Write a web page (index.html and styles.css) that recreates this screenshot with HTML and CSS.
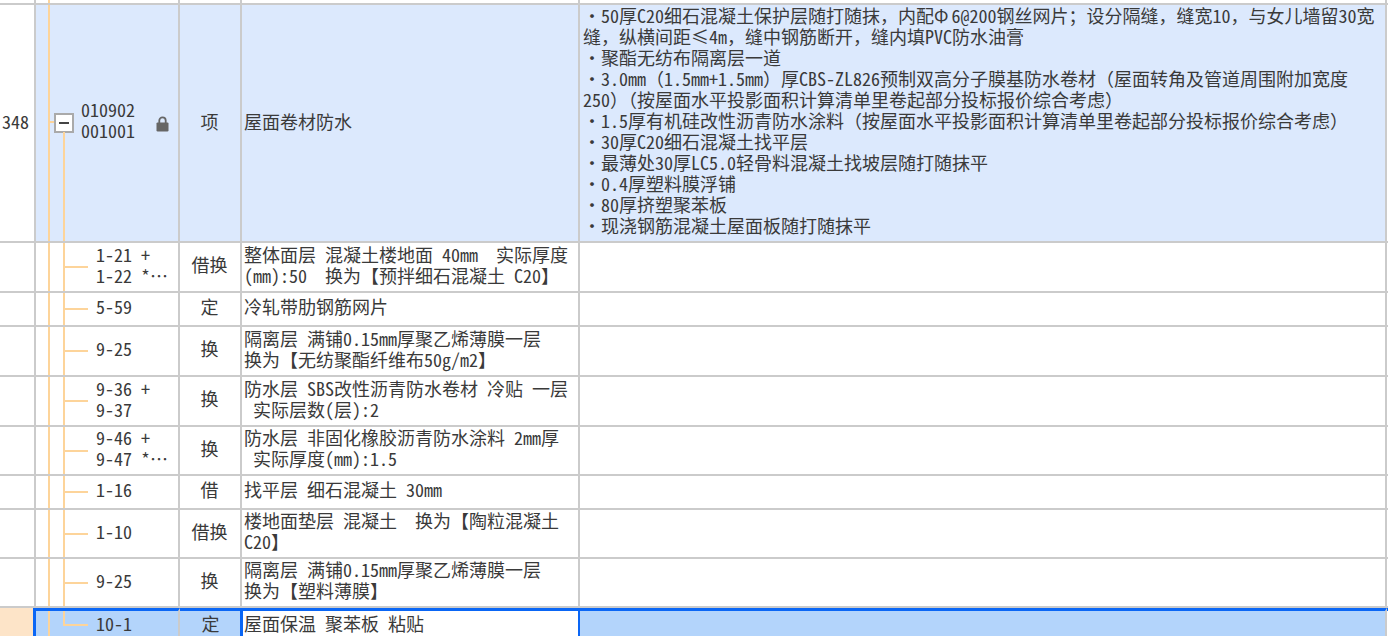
FILE: index.html
```html
<!DOCTYPE html>
<html lang="zh-CN">
<head>
<meta charset="utf-8">
<title>清单</title>
<link rel="stylesheet" href="styles.css">
</head>
<body>
<div class="sheet">
  <div class="row row-top">
    <div class="cell num"></div>
    <div class="cell code"></div>
    <div class="cell type"></div>
    <div class="cell name"></div>
    <div class="cell desc"></div>
  </div>
  <div class="row row-item">
    <div class="cell num">348</div>
    <div class="cell code code-parent">
      <span class="stub"></span>
      <span class="toggle"><span class="minus"></span></span>
      <span class="code-text code-main">010902<br>001001</span>
      <svg class="lock" viewBox="0 0 13 16" aria-hidden="true"><path fill="none" stroke="#666" stroke-width="1.8" d="M3.3 7V4.6a3.2 3.2 0 0 1 6.4 0V7"/><rect x="0.5" y="6.4" width="12" height="9" rx="1.2" fill="#666"/></svg>
    </div>
    <div class="cell type">项</div>
    <div class="cell name">屋面卷材防水</div>
    <div class="cell desc">
      <div class="line">・50厚C20细石混凝土保护层随打随抹，内配<span class="phi">Φ</span>6@200钢丝网片；设分隔缝，缝宽10，与女儿墙留30宽</div>
      <div class="line">缝，纵横间距≤4m，缝中钢筋断开，缝内填PVC防水油膏</div>
      <div class="line">・聚酯无纺布隔离层一道</div>
      <div class="line">・3.0mm（1.5mm+1.5mm）厚CBS-ZL826预制双高分子膜基防水卷材（屋面转角及管道周围附加宽度</div>
      <div class="line">250）（按屋面水平投影面积计算清单里卷起部分投标报价综合考虑）</div>
      <div class="line">・1.5厚有机硅改性沥青防水涂料（按屋面水平投影面积计算清单里卷起部分投标报价综合考虑）</div>
      <div class="line">・30厚C20细石混凝土找平层</div>
      <div class="line">・最薄处30厚LC5.0轻骨料混凝土找坡层随打随抹平</div>
      <div class="line">・0.4厚塑料膜浮铺</div>
      <div class="line">・80厚挤塑聚苯板</div>
      <div class="line">・现浇钢筋混凝土屋面板随打随抹平</div>
    </div>
  </div>
  <div class="row h50">
    <div class="cell num"></div>
    <div class="cell code"><span class="branch"></span><span class="code-text">1-21 +<br>1-22 *⋯</span></div>
    <div class="cell type">借换</div>
    <div class="cell name"><div class="line">整体面层 混凝土楼地面 40mm  实际厚度</div><div class="line">(mm):50  换为【预拌细石混凝土 C20】</div></div>
    <div class="cell desc"></div>
  </div>
  <div class="row h34">
    <div class="cell num"></div>
    <div class="cell code"><span class="branch"></span><span class="code-text">5-59</span></div>
    <div class="cell type">定</div>
    <div class="cell name">冷轧带肋钢筋网片</div>
    <div class="cell desc"></div>
  </div>
  <div class="row h50">
    <div class="cell num"></div>
    <div class="cell code"><span class="branch"></span><span class="code-text">9-25</span></div>
    <div class="cell type">换</div>
    <div class="cell name"><div class="line">隔离层 满铺0.15mm厚聚乙烯薄膜一层</div><div class="line">换为【无纺聚酯纤维布50g/m2】</div></div>
    <div class="cell desc"></div>
  </div>
  <div class="row h50">
    <div class="cell num"></div>
    <div class="cell code"><span class="branch"></span><span class="code-text">9-36 +<br>9-37</span></div>
    <div class="cell type">换</div>
    <div class="cell name"><div class="line">防水层 SBS改性沥青防水卷材 冷贴 一层</div><div class="line"> 实际层数(层):2</div></div>
    <div class="cell desc"></div>
  </div>
  <div class="row h49">
    <div class="cell num"></div>
    <div class="cell code"><span class="branch"></span><span class="code-text">9-46 +<br>9-47 *⋯</span></div>
    <div class="cell type">换</div>
    <div class="cell name"><div class="line">防水层 非固化橡胶沥青防水涂料 2mm厚</div><div class="line"> 实际厚度(mm):1.5</div></div>
    <div class="cell desc"></div>
  </div>
  <div class="row h34">
    <div class="cell num"></div>
    <div class="cell code"><span class="branch"></span><span class="code-text">1-16</span></div>
    <div class="cell type">借</div>
    <div class="cell name">找平层 细石混凝土 30mm</div>
    <div class="cell desc"></div>
  </div>
  <div class="row h49">
    <div class="cell num"></div>
    <div class="cell code"><span class="branch"></span><span class="code-text">1-10</span></div>
    <div class="cell type">借换</div>
    <div class="cell name"><div class="line">楼地面垫层 混凝土  换为【陶粒混凝土</div><div class="line">C20】</div></div>
    <div class="cell desc"></div>
  </div>
  <div class="row h49">
    <div class="cell num"></div>
    <div class="cell code"><span class="branch"></span><span class="code-text">9-25</span></div>
    <div class="cell type">换</div>
    <div class="cell name"><div class="line">隔离层 满铺0.15mm厚聚乙烯薄膜一层</div><div class="line">换为【塑料薄膜】</div></div>
    <div class="cell desc"></div>
  </div>
  <div class="row row-sel">
    <div class="cell num"></div>
    <div class="cell code"><span class="branch branch-end"></span><span class="code-text">10-1</span></div>
    <div class="cell type">定</div>
    <div class="cell name">屋面保温 聚苯板 粘贴</div>
    <div class="cell desc"></div>
    <div class="cell edge"></div>
  </div>
</div>
</body>
</html>
```
FILE: styles.css
```css
* { box-sizing: border-box; }
html, body { margin: 0; padding: 0; height: 100%; overflow: hidden; background: #fff; }
body {
  font-family: "Noto Sans Mono CJK SC", "Noto Sans CJK SC", "Liberation Mono", monospace;
  font-size: 18px;
  line-height: 21px;
  color: #3a3a3a;
}
.sheet { display: flex; flex-direction: column; width: 1388px; height: 636px; overflow: hidden; }
.row {
  display: grid;
  grid-template-columns: 36px 144px 62px 338px 807px 1px;
  border-bottom: 2px solid #cbcbcb;
  flex: none;
}
.row-top { height: 5px; }
.row-item { height: 238px; }
.h50 { height: 50px; }
.h49 { height: 49px; }
.h34 { height: 34px; }
.cell {
  position: relative;
  display: flex;
  flex-direction: column;
  justify-content: center;
  border-right: 2px solid #cbcbcb;
  padding-bottom: 5px;
  white-space: pre;
  min-width: 0;
}
.row-top .cell { padding-bottom: 0; }
.row-item .num, .row-item .name, .row-item .type { padding-bottom: 3px; }
.row-item .code { padding-bottom: 7px; }
.row-item .desc { padding-bottom: 5px; }
.num { padding-left: 2px; }
.type { align-items: center; padding-right: 1px; }
.name { padding-left: 2px; }
.desc { padding-left: 3px; }
.phi { margin-right: 3px; }
.row-item .code, .row-item .type, .row-item .name, .row-item .desc { background: #dce9fd; }
.code::before {
  content: "";
  position: absolute;
  left: 12px;
  top: 0;
  bottom: 0;
  width: 2px;
  background: #fdd49a;
}
.code:not(.code-parent):not(.row-top .code)::after {
  content: "";
  position: absolute;
  left: 27px;
  top: 0;
  bottom: 0;
  width: 2px;
  background: #fdd49a;
}
.code-text { position: relative; padding-left: 60px; }
.code-main { padding-left: 45px; }
.branch {
  position: absolute;
  left: 28px;
  top: calc(50% - 1px);
  width: 24px;
  height: 2px;
  background: #fdd49a;
}
.stub {
  position: absolute;
  left: 13px;
  top: 116px;
  width: 6px;
  height: 2px;
  background: #fdd49a;
}
.toggle {
  position: absolute;
  left: 18px;
  top: 108px;
  width: 20px;
  height: 20px;
  border: 2px solid #aaa;
  background: #fff;
  display: flex;
  align-items: center;
  justify-content: center;
}
.minus { width: 10px; height: 2px; background: #444; }
.code-parent::after {
  content: "";
  position: absolute;
  left: 27px;
  top: 127px;
  bottom: 0;
  width: 2px;
  background: #fdd49a;
}
.lock { position: absolute; left: 120px; top: 111px; width: 13px; height: 16px; }
.row-sel { flex: 1; border-bottom: 0; }
.row-sel .cell { border-top: 3px solid #0a66f5; border-right: 0; padding-bottom: 0; }
.row-sel .num { background: #fde4c8; border-top: 0; border-right: 3px solid #0a66f5; }
.row-sel .code, .row-sel .type, .row-sel .desc, .row-sel .edge { background: #b3d4fb; }
.row-sel .code { border-right: 2px solid #cbcbcb; }
.row-sel .desc { border-right: 2px solid #cbcbcb; padding-left: 0; }
.row-sel .edge { background: #fff; }
.row-sel .code:not(.code-parent):not(.row-top .code)::after { bottom: auto; height: 15px; }
.row-sel .branch-end { top: 13px; }
.row-sel .name {
  background: #fff;
  margin-left: -2px;
  margin-right: -1px;
  padding-left: 1px;
  border-left: 3px solid #0a66f5;
  border-right: 3px solid #0a66f5;
}
```
